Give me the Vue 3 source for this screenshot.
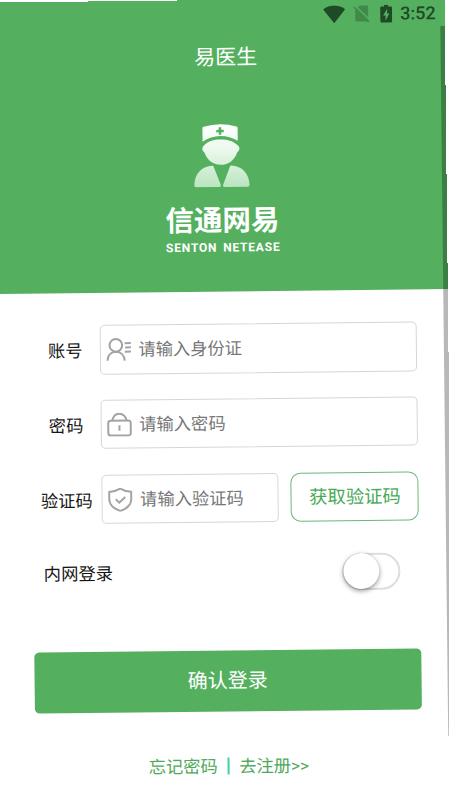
<script setup>
import { ref } from 'vue'

const intranet = ref(false)
const fields = [
  { key: 'account', label: '账号', hint: '请输入身份证' },
  { key: 'password', label: '密码', hint: '请输入密码' },
  { key: 'code', label: '验证码', hint: '请输入验证码' },
]
</script>

<template>
  <div class="viewport">
    <main class="screen">
      <header class="hero">
        <div class="status">
          <svg class="wifi" viewBox="0 0 22 18"><path d="M0 4.2C6-1 16-1 22 4.2L11 18Z" /></svg>
          <svg class="sim" viewBox="0 0 17 18">
            <path class="faint" d="M6.500 .5h7Q15 .5 15 2v14.500H3.500Q2 16.500 2 15V5z" />
            <path class="gap" d="M1.500 .2L17 15.500" />
            <path class="slash" d="M.8 2L15.800 17.300" />
          </svg>
          <svg class="battery" viewBox="0 0 12 18">
            <path fill-rule="evenodd" d="M4 0h4v1.800h2.600Q12 1.800 12 3.200v13.400Q12 18 10.600 18H1.400Q0 18 0 16.600V3.200Q0 1.800 1.400 1.800H4zM7 4L3 10.800h2.400V15.800L9.200 8.800H7z" />
          </svg>
          <span class="clock">3:52</span>
        </div>
        <h1 class="title">易医生</h1>
        <svg class="doctor" viewBox="0 0 56 64">
          <defs>
            <linearGradient id="fade" x1="0" y1="0" x2="0" y2="64" gradientUnits="userSpaceOnUse">
              <stop offset="0" stop-color="#fff" />
              <stop offset=".4" stop-color="#ecf8ed" />
              <stop offset="1" stop-color="#b9e5bf" />
            </linearGradient>
          </defs>
          <path fill="url(#fade)" d="M9 4.600Q9 3.500 10.200 3.100Q26.500-1.800 43 3.100Q44.200 3.500 44.200 4.600V17.500Q36 12.500 26.700 12.500T9 18Z" />
          <path fill="#54b05f" d="M25.300 3.800h2.500v2.500h2.500v2.500h-2.500v2.500h-2.500V8.800h-2.500V6.300h2.500z" />
          <path fill="url(#fade)" d="M10.500 21.500C15 17.300 20.500 16 26.800 16S39 17.300 43.500 21.500Q46 23 45.800 25.500Q45.400 28.200 43.600 28.800C40.500 37 34.500 41.300 27.200 41.300S13.500 37 10.700 28.800Q9 28 8.700 25.500T10.500 21.500Z" />
          <path fill="url(#fade)" d="M18.500 42Q19.300 42 19.700 43L26.800 61.500Q27 63.500 25.500 63.500H2Q.3 63.500.3 61.500C.5 50.500 7.300 42.500 18.500 42Z" />
          <path fill="url(#fade)" d="M37.200 42Q36.500 42 36.100 43L29 61.500Q28.600 63.500 30.300 63.500H53.500Q55.500 63.500 55.500 61.500C55.200 50.500 48.500 42.500 37.200 42Z" />
        </svg>
        <p class="brand">信通网易</p>
        <p class="latin">SENTON NETEASE</p>
      </header>

      <section class="form">
        <div v-for="f in fields" :key="f.key" class="row">
          <label class="label">{{ f.label }}</label>
          <div class="field">
            <svg v-if="f.key === 'account'" class="icon" viewBox="0 0 26 24">
              <circle cx="10" cy="7.600" r="6.300" />
              <path d="M1.500 23C1.800 17.500 5 14 10 14S18.300 17.500 18.800 23M18.800 5.500H25M19.200 9.800H25M18.800 14H25" />
            </svg>
            <svg v-else-if="f.key === 'password'" class="icon" viewBox="0 0 26 24">
              <rect x="1.500" y="8" width="22.500" height="14.800" rx="2.500" />
              <path d="M5.500 8C6.500 3.500 9 1 12.500 1S19 3.500 20 8M12.700 12.500v5.500" />
            </svg>
            <svg v-else class="icon" viewBox="0 0 26 24">
              <path d="M12.700 1Q17.700 4 23.700 4.300V11.500C23.700 17.500 19.200 21 12.700 23.300C6.200 21 1.700 17.500 1.700 11.500V4.300Q7.700 4 12.700 1ZM8.200 11.500L11.700 15L17.700 9.300" />
            </svg>
            <span class="hint">{{ f.hint }}</span>
          </div>
          <button v-if="f.key === 'code'" class="get-code">获取验证码</button>
        </div>
      </section>

      <div class="intranet">
        <span class="caption">内网登录</span>
        <button class="toggle" :class="{ on: intranet }" @click="intranet = !intranet"><i class="thumb"></i></button>
      </div>

      <button class="submit">确认登录</button>

      <nav class="links">
        <a>忘记密码</a>
        <i class="bar"></i>
        <a>去注册&gt;&gt;</a>
      </nav>
      <i class="edge"></i>
    </main>
  </div>
</template>

<style>
body {
  background: #fff;
  overflow: hidden;
}
</style>

<style scoped>
* {
  box-sizing: border-box;
}
.viewport {
  width: 449px;
  height: 798px;
  padding-top: 2px;
  overflow: hidden;
  background: #fff;
  font-family: Roboto, 'Noto Sans CJK SC', sans-serif;
  /* stepped top and right borders of the tilted sheet */
  clip-path: polygon(0 2px, 88px 2px, 88px 1px, 177px 1px, 177px 0, 445px 0, 445px 85px, 446px 85px, 446px 174px, 447px 174px, 447px 263px, 448px 263px, 448px 352px, 449px 352px, 449px 798px, 0 798px);
}
.screen {
  position: relative;
  display: flow-root;
  width: 440px;
  height: 810px;
  transform: rotate(-0.64deg);
  transform-origin: 0 0;
  color: #151515;
}
.hero {
  display: flex;
  flex-direction: column;
  align-items: center;
  height: 301.500px;
  margin: -10px -20px 0;
  padding: 11px 20px 0;
  background: #54b05f;
  color: #fff;
}
.status {
  display: flex;
  align-items: center;
  align-self: stretch;
  justify-content: flex-end;
  height: 30px;
  padding-right: 4.500px;
}
.status svg {
  height: 18px;
  fill: #1f4a27;
}
.wifi {
  width: 22px;
  margin-right: 8px;
}
.status .sim .faint {
  fill: #428a4b;
}
.sim {
  width: 17px;
  margin-right: 10px;
}
.sim .gap {
  stroke: #54b05f;
  stroke-width: 1.500;
}
.sim .slash {
  stroke: #428a4b;
  stroke-width: 1.600;
}
.battery {
  width: 12px;
  margin-right: 8.500px;
}
.clock {
  color: #1f4a27;
  font: 500 18px/20px Roboto, sans-serif;
}
.title {
  margin: 11.500px 0 0 10px;
  font-size: 21px;
  line-height: 30px;
  font-weight: 400;
}
.doctor {
  width: 56px;
  height: 64px;
  margin-top: 51.500px;
}
.brand {
  margin: 14.500px 0 0;
  font-size: 28.500px;
  line-height: 38px;
  font-weight: 700;
}
.latin {
  margin: 0 0 0 1px;
  font: 700 12px/14px Roboto, sans-serif;
  letter-spacing: 0.800px;
  word-spacing: 2px;
  white-space: nowrap;
}
.form {
  display: flex;
  flex-direction: column;
  gap: 25.400px;
  margin-top: 32.600px;
  padding: 0 26.600px 0 27px;
}
.row {
  display: flex;
  height: 49.500px;
}
.label {
  width: 68.700px;
  padding-top: 2px;
  text-align: center;
  font-size: 17.300px;
  line-height: 49px;
}
.field {
  display: flex;
  flex: 1;
  align-items: center;
  border: 1.500px solid #d6d6d6;
  border-radius: 5px;
  padding-left: 5px;
}
.icon {
  width: 26px;
  height: 24px;
  margin: 0 6.800px 0 0;
  fill: none;
  stroke: #a3a3a3;
  stroke-width: 2;
}
.hint {
  color: #777;
  font-size: 17.300px;
  line-height: 46px;
}
button {
  padding: 0;
  font-family: inherit;
}
.get-code {
  width: 128px;
  margin-left: 12.500px;
  padding-bottom: 4px;
  border: 1.500px solid #6aba74;
  border-radius: 10px;
  background: #fff;
  color: #49a956;
  font-size: 18.300px;
}
.intranet {
  display: flex;
  align-items: center;
  justify-content: space-between;
  margin-top: 31.400px;
  height: 37px;
  padding: 0 45.700px 0 37.400px;
  font-size: 17.300px;
}
.caption {
  padding-bottom: 3px;
}
.toggle {
  width: 58px;
  height: 37px;
  border: 2px solid #dedede;
  border-radius: 19px;
  background: #fff;
}
.thumb {
  display: block;
  width: 36px;
  height: 36px;
  margin: -1.500px 0 0 -1.500px;
  border-radius: 50%;
  background: #fff;
  box-shadow: 0 2px 5px rgba(0, 0, 0, 0.4), 0 0 1px rgba(0, 0, 0, 0.2);
}
.toggle.on .thumb {
  margin-left: 20px;
}
.submit {
  display: block;
  width: 387px;
  height: 60.500px;
  margin: 59.300px 0 0 26.500px;
  padding-bottom: 4px;
  border: 0;
  border-radius: 5px;
  background: #54b05f;
  color: #fff;
  font-size: 20px;
}
.links {
  display: flex;
  align-items: center;
  height: 30px;
  margin: 39px 0 0 140px;
  gap: 9.700px;
  color: #4fa95b;
  font-size: 17.300px;
}
.bar {
  width: 2px;
  height: 17px;
  margin-top: 2px;
  background: #3fd39b;
}
.edge {
  position: absolute;
  left: 440px;
  top: 28.500px;
  width: 20px;
  height: 710.500px;
  background: rgba(0, 0, 0, 0.28);
}
</style>
